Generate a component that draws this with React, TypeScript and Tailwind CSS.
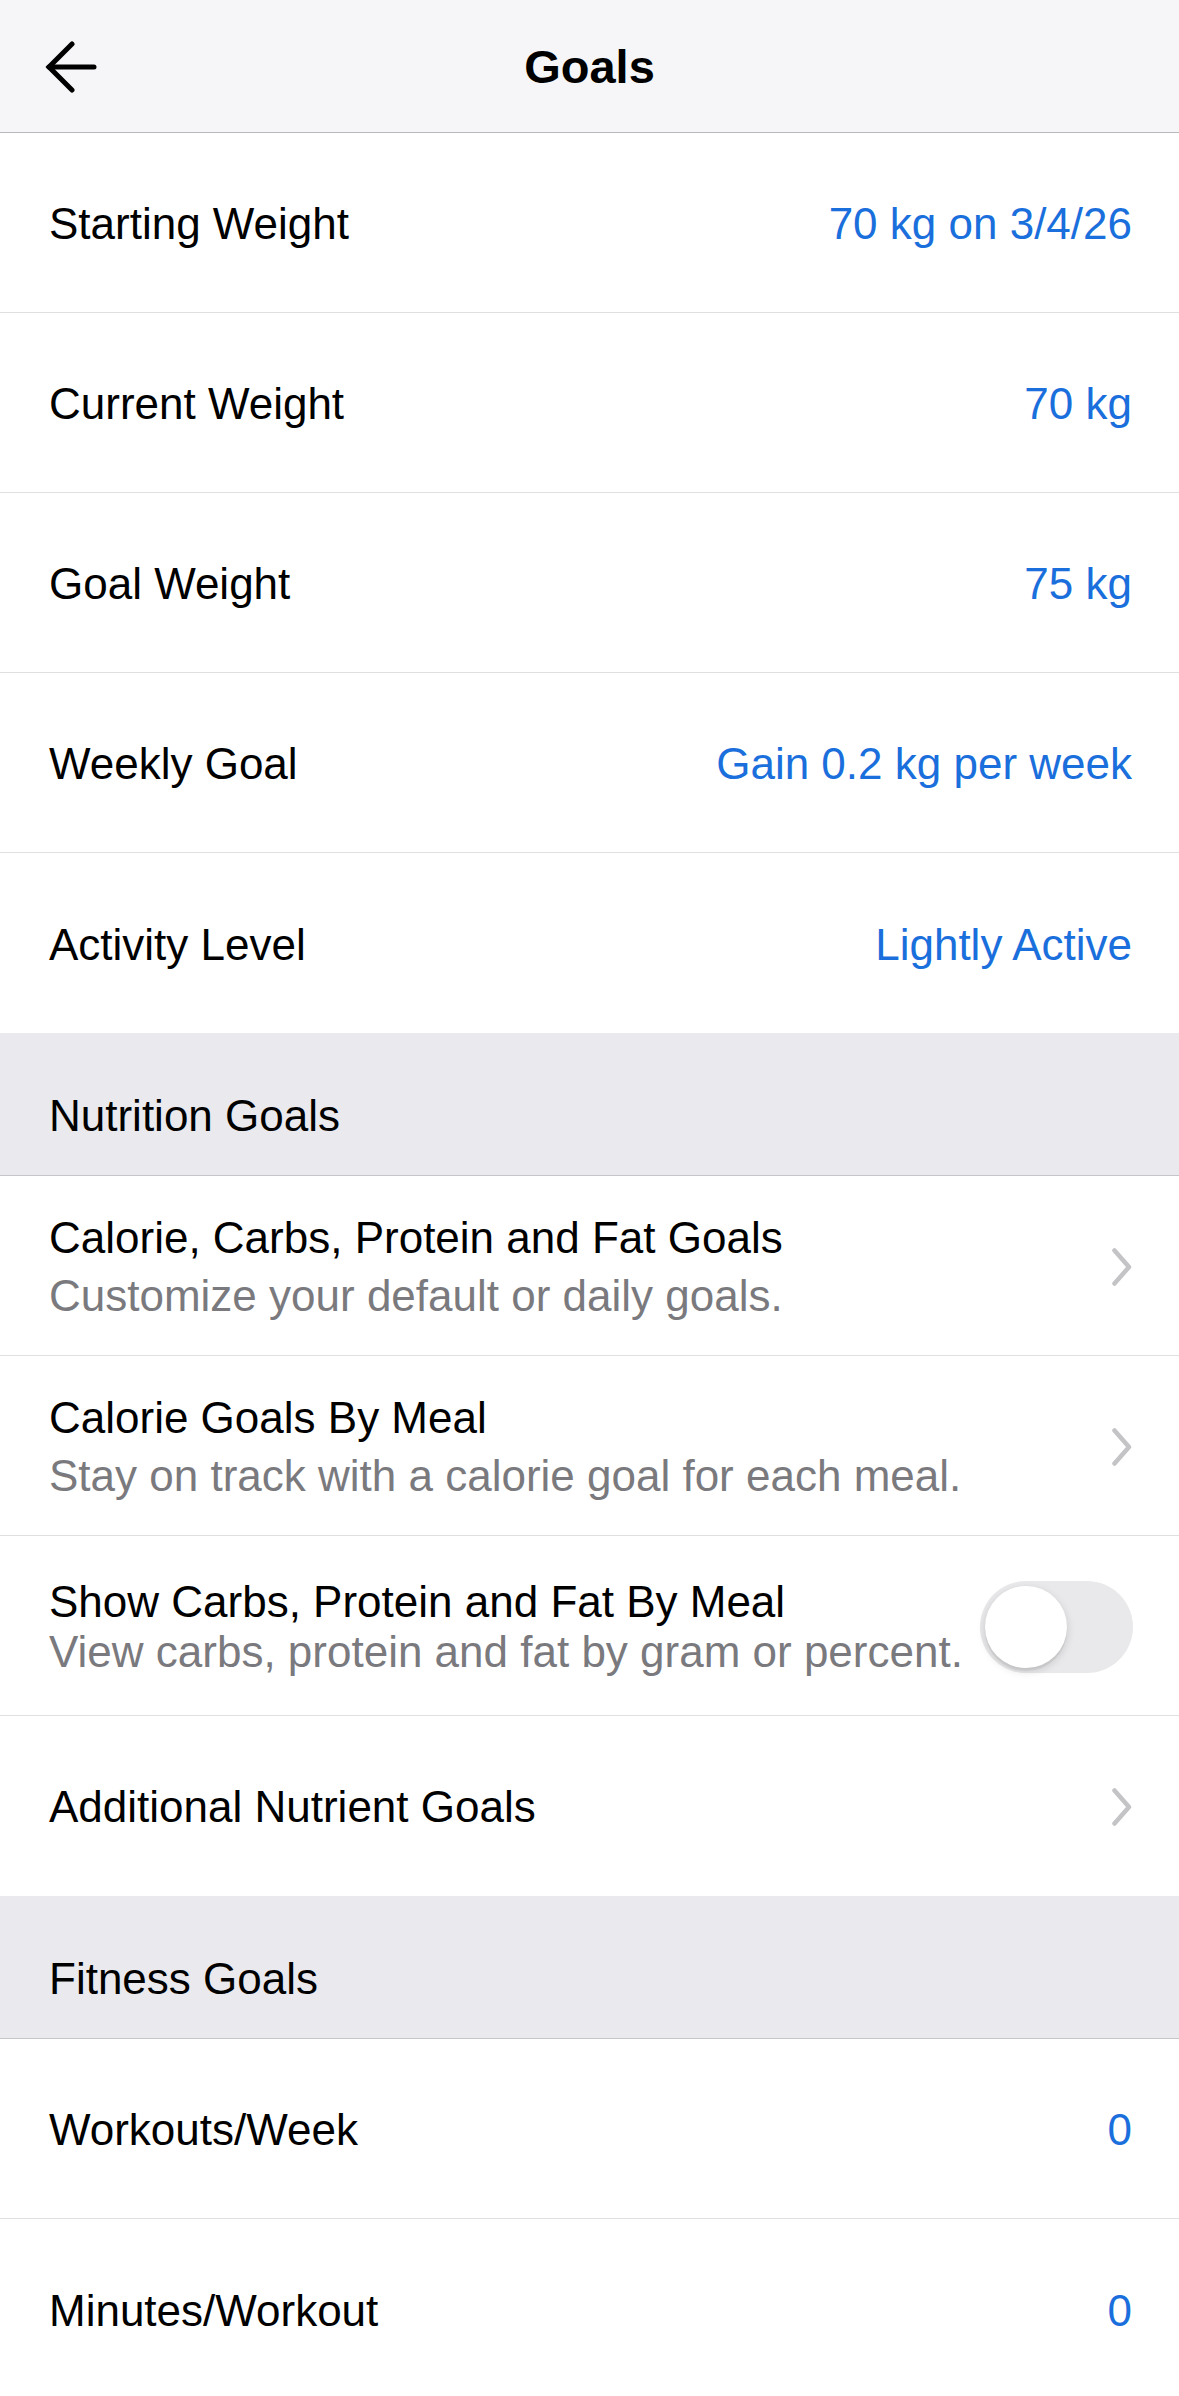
import React from "react";

const font = { fontFamily: '"Liberation Sans", Arial, sans-serif' };

function BackArrow() {
  return (
    <svg width="52" height="52" viewBox="0 0 52 52" fill="none">
      <path d="M4 26 H49" stroke="#000" strokeWidth="5" strokeLinecap="round" />
      <path d="M27 3 L4 26 L27 49" stroke="#000" strokeWidth="5" strokeLinecap="round" strokeLinejoin="miter" />
    </svg>
  );
}

function Chevron() {
  return (
    <svg width="20" height="38" viewBox="0 0 20 38" fill="none">
      <path d="M2.5 2.5 L17 19 L2.5 35.5" stroke="#c4c4c7" strokeWidth="4.5" strokeLinecap="round" strokeLinejoin="round" />
    </svg>
  );
}

function ValueRow({ label, value, last }: { label: string; value: string; last?: boolean }) {
  return (
    <div
      className={
        "flex h-[180px] items-center justify-between bg-white pl-[49px] pr-[47px] pt-[3px] " +
        (last ? "" : "border-b border-[#e0e0e2]")
      }
    >
      <span className="text-[44px] leading-[52px] text-black">{label}</span>
      <span className="text-[44px] leading-[52px] text-[#1a6fdc]">{value}</span>
    </div>
  );
}

function LinkRow({ title, sub, last }: { title: string; sub?: string; last?: boolean }) {
  return (
    <div
      className={
        "flex h-[180px] items-center justify-between bg-white pl-[49px] pr-[47px] pt-[2px] " +
        (last ? "" : "border-b border-[#e0e0e2]")
      }
    >
      <div className="flex flex-col">
        <span className="text-[44px] leading-[58px] text-black">{title}</span>
        {sub && <span className="text-[44px] leading-[58px] text-[#7a7a7e]">{sub}</span>}
      </div>
      <Chevron />
    </div>
  );
}

function SectionHeader({ title }: { title: string }) {
  return (
    <div className="flex h-[143px] items-center border-b border-[#c6c6c9] bg-[#e9e9ee] pl-[49px] pt-[23px]">
      <span className="text-[44px] leading-[52px] text-black">{title}</span>
    </div>
  );
}

export default function App() {
  return (
    <div className="min-h-screen w-full bg-white" style={font}>
      {/* top bar */}
      <header className="grid h-[133px] grid-cols-[1fr_auto_1fr] items-center border-b border-[#b9b9bd] bg-[#f6f6f8] pt-[2px]">
        <div className="pl-[45px] flex items-center">
          <BackArrow />
        </div>
        <h1 className="text-[47px] font-semibold leading-[56px] text-black">Goals</h1>
        <div />
      </header>

      <ValueRow label="Starting Weight" value="70 kg on 3/4/26" />
      <ValueRow label="Current Weight" value="70 kg" />
      <ValueRow label="Goal Weight" value="75 kg" />
      <ValueRow label="Weekly Goal" value="Gain 0.2 kg per week" />
      <ValueRow label="Activity Level" value="Lightly Active" last />

      <SectionHeader title="Nutrition Goals" />
      <LinkRow title="Calorie, Carbs, Protein and Fat Goals" sub="Customize your default or daily goals." />
      <LinkRow title="Calorie Goals By Meal" sub="Stay on track with a calorie goal for each meal." />

      <div className="flex h-[180px] items-center justify-between border-b border-[#e0e0e2] bg-white pl-[49px] pr-[46px] pt-[2px]">
        <div className="flex flex-col whitespace-nowrap">
          <span className="text-[44px] leading-[50px] text-black">Show Carbs, Protein and Fat By Meal</span>
          <span className="text-[44px] leading-[50px] text-[#7a7a7e]">View carbs, protein and fat by gram or percent.</span>
        </div>
        <div className="flex h-[92px] w-[153px] shrink-0 items-center rounded-full bg-[#e9e9eb] pl-[5px]">
          <div className="h-[82px] w-[82px] rounded-full bg-white shadow-[0_3px_8px_rgba(0,0,0,0.15),0_3px_1px_rgba(0,0,0,0.06)]" />
        </div>
      </div>

      <LinkRow title="Additional Nutrient Goals" last />

      <SectionHeader title="Fitness Goals" />
      <ValueRow label="Workouts/Week" value="0" />
      <ValueRow label="Minutes/Workout" value="0" last />
    </div>
  );
}
